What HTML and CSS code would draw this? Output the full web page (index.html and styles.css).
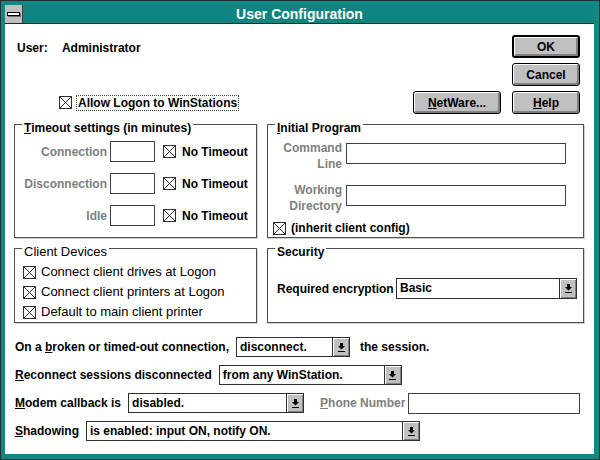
FILE: index.html
```html
<!DOCTYPE html>
<html lang="en">
<head>
  <meta charset="UTF-8">
  <title>User Configuration</title>
  <link rel="stylesheet" href="styles.css">
</head>
<body>
  <div class="window">
    <div class="titlebar">
      <div class="sysmenu"><span class="sysbar"></span></div>
      <div class="title">User Configuration</div>
    </div>

    <div class="dialog">
      <div class="top">
        <div class="user-line">
          <span class="user-label">User:</span>
          <span>Administrator</span>
        </div>
        <div class="btn-stack">
          <button class="btn btn-default">OK</button>
          <button class="btn">Cancel</button>
        </div>
        <div class="allow-row">
          <label class="check"><span class="box"></span><span class="focus">Allow Logon to WinStations</span></label>
          <button class="btn btn-wide"><u>N</u>etWare...</button>
        </div>
        <button class="btn"><u>H</u>elp</button>
      </div>

      <div class="groups">
        <div class="group">
          <div class="group-title"><u>T</u>imeout settings (in minutes)</div>
          <div class="timeout-grid">
            <span class="dim">Connection</span>
            <span class="field"></span>
            <label class="check"><span class="box"></span>No Timeout</label>
            <span class="dim">Disconnection</span>
            <span class="field"></span>
            <label class="check"><span class="box"></span>No Timeout</label>
            <span class="dim">Idle</span>
            <span class="field"></span>
            <label class="check"><span class="box"></span>No Timeout</label>
          </div>
        </div>

        <div class="group">
          <div class="group-title"><u>I</u>nitial Program</div>
          <div class="prog-grid">
            <span class="dim prog-label">Command<br>Line</span>
            <span class="field"></span>
            <span class="dim prog-label">Working<br>Directory</span>
            <span class="field"></span>
          </div>
          <label class="check inherit"><span class="box"></span>(inherit client config)</label>
        </div>

        <div class="group">
          <div class="group-title plain">Client Devices</div>
          <div class="devices">
            <label class="check"><span class="box"></span>Connect client drives at Logon</label>
            <label class="check"><span class="box"></span>Connect client printers at Logon</label>
            <label class="check"><span class="box"></span>Default to main client printer</label>
          </div>
        </div>

        <div class="group">
          <div class="group-title">Security</div>
          <div class="security-row">
            <span>Required encryption</span>
            <div class="combo combo-encrypt">
              <span class="combo-text">Basic</span>
              <span class="combo-btn"><svg width="7" height="9" viewBox="0 0 7 9"><path d="M2 0h3v3h2L3.5 6.5 0 3h2z M0 8h7v1H0z"/></svg></span>
            </div>
          </div>
        </div>
      </div>

      <div class="options">
        <div class="option">
          <span>On a <u>b</u>roken or timed-out connection,</span>
          <div class="combo combo-broken">
            <span class="combo-text">disconnect.</span>
            <span class="combo-btn"><svg width="7" height="9" viewBox="0 0 7 9"><path d="M2 0h3v3h2L3.5 6.5 0 3h2z M0 8h7v1H0z"/></svg></span>
          </div>
          <span class="after">the session.</span>
        </div>
        <div class="option">
          <span><u>R</u>econnect sessions disconnected</span>
          <div class="combo combo-reconnect">
            <span class="combo-text">from any WinStation.</span>
            <span class="combo-btn"><svg width="7" height="9" viewBox="0 0 7 9"><path d="M2 0h3v3h2L3.5 6.5 0 3h2z M0 8h7v1H0z"/></svg></span>
          </div>
        </div>
        <div class="option">
          <span><u>M</u>odem callback is</span>
          <div class="combo combo-modem">
            <span class="combo-text">disabled.</span>
            <span class="combo-btn"><svg width="7" height="9" viewBox="0 0 7 9"><path d="M2 0h3v3h2L3.5 6.5 0 3h2z M0 8h7v1H0z"/></svg></span>
          </div>
          <span class="dim phone"><u>P</u>hone Number</span>
          <span class="field phone-field"></span>
        </div>
        <div class="option">
          <span><u>S</u>hadowing</span>
          <div class="combo combo-shadow">
            <span class="combo-text">is enabled: input ON, notify ON.</span>
            <span class="combo-btn"><svg width="7" height="9" viewBox="0 0 7 9"><path d="M2 0h3v3h2L3.5 6.5 0 3h2z M0 8h7v1H0z"/></svg></span>
          </div>
        </div>
      </div>
    </div>
  </div>
</body>
</html>
```

FILE: styles.css
```css
* {
  box-sizing: border-box;
  margin: 0;
  padding: 0;
}

body {
  width: 600px;
  height: 460px;
  overflow: hidden;
  background: #118884;
}

.window {
  width: 600px;
  height: 460px;
  border: 1px solid #1b3232;
  background: #118884;
  padding: 4px 5px 5px 4px;
  display: flex;
  flex-direction: column;
}

/* title bar */
.titlebar {
  height: 19px;
  display: flex;
  border-bottom: 1px solid #1c2a2a;
  background: #0f8480;
}

.sysmenu {
  width: 18px;
  height: 18px;
  background: #c0c0c0;
  border-right: 1px solid #404040;
  display: flex;
  align-items: center;
  justify-content: center;
}

.sysbar {
  width: 13px;
  height: 4px;
  background: #fff;
  border: 1px solid #000;
  box-shadow: 1px 1px 0 #707070;
}

.title {
  flex: 1;
  padding-right: 18px;
  text-align: center;
  color: #fff;
  font: bold 14px/18px "Liberation Sans", Arial, sans-serif;
}

/* dialog body */
.dialog {
  flex: 1;
  background: #fff;
  padding: 11px 10px 0 9px;
  font: bold 12px/14px "Liberation Sans", Arial, sans-serif;
  color: #000;
}

.dim {
  color: #808080;
}

u {
  text-decoration-thickness: 1px;
  text-underline-offset: 1px;
}

.top {
  display: grid;
  grid-template-columns: 1fr 68px;
  column-gap: 11px;
  row-gap: 5px;
  margin-right: 4px;
}

.user-line {
  padding: 6px 0 0 3px;
}

.user-label {
  display: inline-block;
  width: 42px;
}

.btn-stack {
  display: flex;
  flex-direction: column;
  gap: 5px;
}

.allow-row {
  display: flex;
  align-items: center;
  justify-content: space-between;
  padding-left: 45px;
}

.btn {
  width: 68px;
  height: 23px;
  font: bold 12px "Liberation Sans", Arial, sans-serif;
  color: #000;
  background: #c0c0c0;
  border: 1px solid #000;
  border-radius: 3px;
  box-shadow: inset 1px 1px 0 #fff, inset -2px -2px 0 #808080;
}

.btn-default {
  border-width: 2px;
}

.btn-wide {
  width: 88px;
}

.check {
  display: flex;
  align-items: center;
  gap: 5px;
  white-space: nowrap;
}

.box {
  flex: none;
  width: 13px;
  height: 13px;
  border: 1px solid #303030;
  background:
    linear-gradient(45deg, transparent calc(50% - 0.7px), #303030 50%, transparent calc(50% + 0.7px)),
    linear-gradient(-45deg, transparent calc(50% - 0.7px), #303030 50%, transparent calc(50% + 0.7px)),
    #fff;
}

.focus {
  border: 1px dotted #404040;
  padding: 0 1px;
  margin-left: -1px;
}

.field {
  flex: none;
  height: 21px;
  background: #fff;
  border: 1px solid #404040;
}

/* group boxes */
.groups {
  display: grid;
  grid-template-columns: 243px 317px;
  gap: 10px;
  margin-top: 10px;
}

.group {
  border: 1px solid #505050;
  box-shadow: 1px 1px 0 #cfcfcf;
}

.group-title {
  width: fit-content;
  margin: -4px 0 0 7px;
  padding: 0 2px;
  background: #fff;
  line-height: 14px;
}

.group-title.plain {
  font-weight: normal;
  font-size: 13px;
}

.timeout-grid {
  display: grid;
  grid-template-columns: 92px 45px auto;
  grid-auto-rows: 21px;
  column-gap: 3px;
  row-gap: 11px;
  align-items: center;
  margin-top: 6px;
  padding-bottom: 11px;
}

.timeout-grid .dim {
  justify-self: end;
}

.timeout-grid .check {
  margin-left: 5px;
  gap: 6px;
}

.prog-grid {
  display: grid;
  grid-template-columns: 74px 220px;
  column-gap: 4px;
  row-gap: 10px;
  margin-top: 5px;
}

.prog-label {
  text-align: right;
  line-height: 16px;
}

.prog-grid .field {
  margin-top: 3px;
}

.inherit {
  margin: 7px 0 0 5px;
}

.devices {
  margin-top: 3px;
  padding-left: 8px;
  font-weight: normal;
  font-size: 13px;
}

.devices .check {
  height: 20px;
}

.security-row {
  display: flex;
  align-items: center;
  justify-content: space-between;
  margin: 19px 6px 0 9px;
}

/* combo boxes */
.combo {
  flex: none;
  display: flex;
  height: 20px;
  border: 1px solid #303030;
  background: #fff;
}

.combo-text {
  flex: 1;
  padding-left: 3px;
  line-height: 18px;
  white-space: nowrap;
}

.combo-btn {
  width: 17px;
  background: #c0c0c0;
  border-left: 1px solid #303030;
  box-shadow: inset 1px 1px 0 #fff, inset -1px -1px 0 #808080;
  display: flex;
  align-items: center;
  justify-content: center;
}

.combo-encrypt { width: 181px; height: 21px; }
.combo-broken { width: 114px; }
.combo-reconnect { width: 183px; }
.combo-modem { width: 176px; }
.combo-shadow { width: 334px; }

.options {
  display: flex;
  flex-direction: column;
  gap: 8px;
  margin-top: 14px;
}

.option {
  display: flex;
  align-items: center;
  height: 20px;
  gap: 7px;
  padding-left: 1px;
  white-space: nowrap;
}

.after {
  margin-left: 3px;
}

.phone {
  margin-left: 9px;
}

.phone-field {
  width: 172px;
  margin-left: -4px;
}
```
